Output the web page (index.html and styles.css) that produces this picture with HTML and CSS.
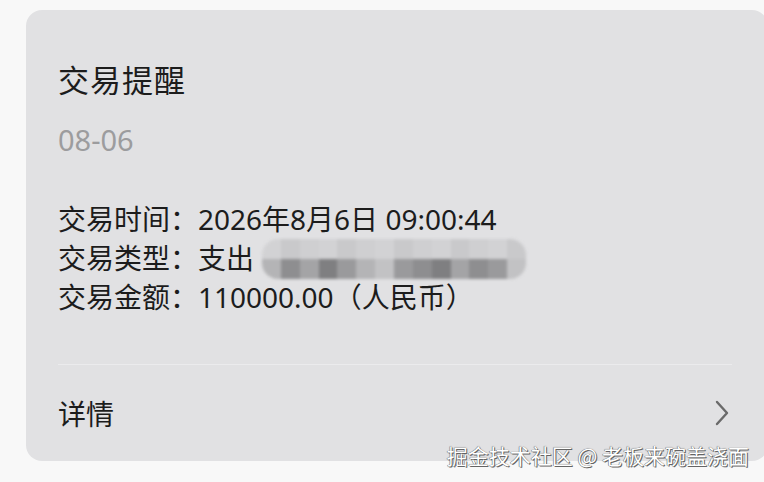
FILE: index.html
```html
<!DOCTYPE html>
<html lang="zh-CN">
<head>
<meta charset="utf-8">
<link rel="stylesheet" href="styles.css">
</head>
<body>
<div class="page">
  <div class="card">
    <div class="title">交易提醒</div>
    <div class="date">08-06</div>
    <div class="info">
      <div class="line">交易时间：2026年8月6日 09:00:44</div>
      <div class="line">交易类型：支出 <span class="mosaic"><span class="row top"><i class="c1"></i><i class="c2"></i><i class="c3"></i><i class="c1"></i><i class="c2"></i><i class="c3"></i><i class="c1"></i><i class="c2"></i><i class="c3"></i><i class="c1"></i><i class="c2"></i><i class="c3"></i><i class="c1"></i><i class="c2"></i></span><span class="row bottom"><i class="d1"></i><i class="d2"></i><i class="d3"></i><i class="d4"></i><i class="d5"></i><i class="d1"></i><i class="d6"></i><i class="d5"></i><i class="d2"></i><i class="d4"></i><i class="d3"></i><i class="d2"></i><i class="d5"></i><i class="d6"></i></span></span></div>
      <div class="line">交易金额：110000.00（人民币）</div>
    </div>
    <div class="divider"></div>
    <div class="detail">
      <span>详情</span>
      <svg class="chev" width="16" height="26" viewBox="0 0 16 26"><path d="M3 2 L13 13 L3 24" fill="none" stroke="#6a6a6a" stroke-width="2.4" stroke-linecap="round" stroke-linejoin="round"/></svg>
    </div>
  </div>
  <div class="watermark">掘金技术社区 @ 老板来碗盖浇面</div>
</div>
</body>
</html>
```
FILE: styles.css
```css
html, body {
  margin: 0;
  padding: 0;
  background: #f8f8f8;
  overflow: hidden;
}
body {
  font-family: "Noto Sans", "Noto Sans CJK SC", sans-serif;
  color: #1c1c1c;
}
.page {
  position: relative;
  width: 764px;
  height: 482px;
  padding-top: 10px;
  box-sizing: border-box;
}
.card {
  margin-left: 26px;
  width: 742px;
  height: 451px;
  box-sizing: border-box;
  background: #e1e1e3;
  border-radius: 16px;
  padding: 50px 36px 0 32px;
  display: flex;
  flex-direction: column;
}
.title {
  font-size: 31px;
  line-height: 40px;
  letter-spacing: 1px;
}
.date {
  margin-top: 22px;
  font-size: 29px;
  line-height: 36px;
  color: #9c9c9e;
}
.info {
  margin-top: 42px;
}
.line {
  font-size: 28px;
  line-height: 39px;
  height: 39px;
  white-space: nowrap;
  display: flex;
  align-items: center;
}
.mosaic {
  display: inline-flex;
  flex-direction: column;
  margin-left: 8px;
  width: 264px;
  height: 40px;
  border-radius: 16px;
  overflow: hidden;
  filter: blur(1.5px);
}
.mosaic .row {
  display: flex;
  flex: 1;
}
.mosaic i {
  flex: 1;
}
.c1 { background: #d2d2d4; }
.c2 { background: #c9c9cb; }
.c3 { background: #cfcfd1; }
.d1 { background: #b4b4b6; }
.d2 { background: #8e8e90; }
.d3 { background: #a4a4a6; }
.d4 { background: #7f7f81; }
.d5 { background: #9a9a9c; }
.d6 { background: #c2c2c4; }
.divider {
  margin-top: 47px;
  height: 1px;
  background: #ebebed;
}
.detail {
  height: 95px;
  display: flex;
  align-items: center;
  justify-content: space-between;
  font-size: 28px;
}
.chev {
  margin-right: 2px;
}
.watermark {
  position: absolute;
  right: 15px;
  bottom: 15px;
  font-family: "Noto Sans CJK SC", sans-serif;
  font-size: 21px;
  line-height: 24px;
  color: #ffffff;
  text-shadow: 0 0 1px #555, 1px 1px 0 #666, -0.5px -0.5px 0 #888;
  white-space: nowrap;
}
```
